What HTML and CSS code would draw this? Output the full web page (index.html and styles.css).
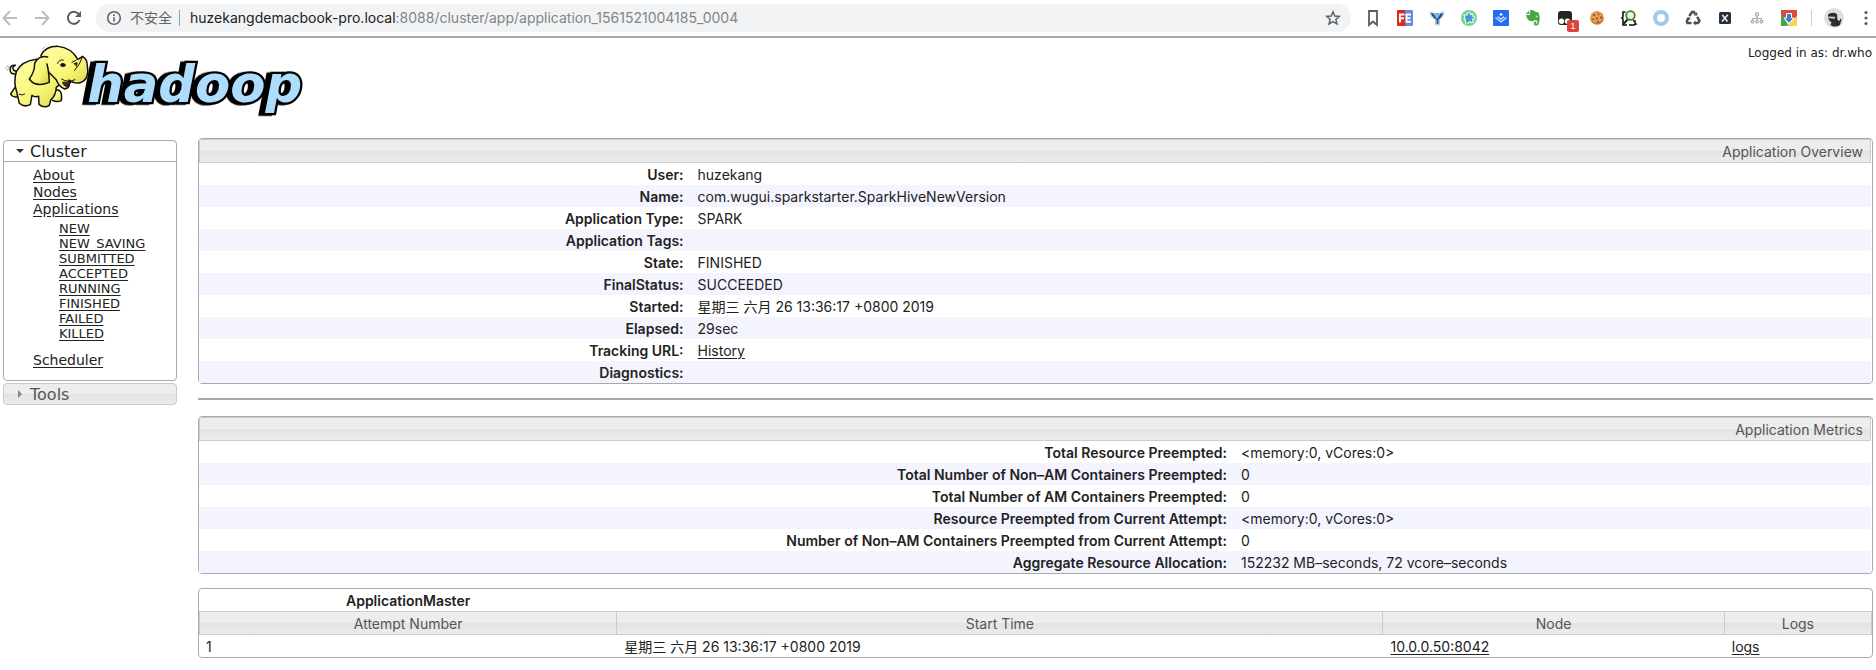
FILE: index.html
```
<!DOCTYPE html>
<html lang="zh-CN">
<head>
<meta charset="utf-8">
<title>Application application_1561521004185_0004</title>
<link rel="stylesheet" href="styles.css">
</head>
<body>
<header class="toolbar">
  <nav class="nav-buttons">
    <button class="icon-button" aria-label="Back"><svg viewBox="0 0 16 16" fill="none" stroke="#bbbdc0" stroke-width="2"><path d="M15 8H2M8 1L1.500 8L8 15"/></svg></button>
    <button class="icon-button" aria-label="Forward"><svg viewBox="0 0 16 16" fill="none" stroke="#bbbdc0" stroke-width="2"><path d="M1 8H14M8 1L14.500 8L8 15"/></svg></button>
    <button class="icon-button" aria-label="Reload"><svg viewBox="0 0 16 16" fill="none" stroke="#5a5d61" stroke-width="2"><path d="M13.500 10A6 6 0 1 1 12.500 4"/><path d="M15 1V7H9Z" fill="#5a5d61" stroke="none"/></svg></button>
  </nav>
  <div class="omnibox">
    <svg class="info" viewBox="0 0 16 16" fill="none" stroke="#5f6368" stroke-width="1.600"><circle cx="8" cy="8" r="6.300"/><path d="M8 7.300V11.500M8 4.300V6"/></svg>
    <span class="insecure">不安全</span>
    <span class="url"><b>huzekangdemacbook-pro.local</b>:8088/cluster/app/application_1561521004185_0004</span>
    <button class="icon-button star" aria-label="Bookmark this page"><svg viewBox="0 0 16 16" fill="none" stroke="#5f6368" stroke-width="1.500"><path d="M8 1.800L9.800 6L14.300 6.400L10.900 9.400L12 13.900L8 11.500L4 13.900L5.100 9.400L1.700 6.400L6.200 6Z"/></svg></button>
  </div>
  <div class="extensions">
    <button class="icon-button" aria-label="Reading list"><svg viewBox="0 0 16 16" fill="none" stroke="#5a5d61" stroke-width="1.800"><path d="M4 1H12V15L8 11.500L4 15Z"/></svg></button>
    <button class="icon-button" aria-label="FE helper"><svg viewBox="0 0 16 16"><rect width="16" height="16" rx="1" fill="#5b8fe8"/><path d="M1 0H8L8.500 16H1Q0 16 0 15V1Q0 0 1 0Z" fill="#d92b20"/><path d="M3 12.500V4.500H7.500M3 8.300H7M14 4.500H9.500V11.700H14M9.500 8.100H13.500" fill="none" stroke="#fff" stroke-width="1.900"/></svg></button>
    <button class="icon-button" aria-label="Yandex"><svg viewBox="0 0 16 16"><path d="M1 2Q4 1 5.500 4L8 8L10.500 4Q12 1 15 2Q15.500 6 10.500 10V15H6.500V10Q.5 6 1 2Z" fill="#eee" stroke="#c8c8c8"/><path d="M2 3Q4.500 2.500 5.500 5L8 9L10.500 5Q11.500 2.500 14 3Q14 6 9.500 10V14H7.500V10Q2 6 2 3Z" fill="#19539b"/><path d="M5 3H11L8 8Z" fill="#64b9ee"/></svg></button>
    <button class="icon-button" aria-label="Extension manager"><svg viewBox="0 0 16 16"><circle cx="8" cy="8" r="8" fill="#68d982"/><path d="M3 5L6 5Q5.500 2.500 8 2.500Q10 2.500 9.500 4.500L12 4L12 6.500Q14.500 6.500 13.500 9L11.500 9L12.500 12L10 12.500Q9 10.500 7.500 13L4.500 13V10Q2 9.500 4 8Z" fill="#4b96d5" stroke="#dff8ef" stroke-width="1.200"/></svg></button>
    <button class="icon-button" aria-label="Juejin"><svg viewBox="0 0 16 16"><rect width="16" height="16" rx="1" fill="#226cf4"/><g fill="none" stroke="#d5e8ff" stroke-width="1.200"><path d="M2.500 7.500L8 12L13.500 7.500M4.800 6.500L8 9.200L11.200 6.500"/></g><path d="M8 2.800L9.800 4.400L8 6L6.200 4.400Z" fill="#fff"/></svg></button>
    <button class="icon-button" aria-label="Evernote"><svg viewBox="0 0 16 16" fill="#46a846"><path d="M5 0Q9-.5 10 1.500L13.500 2.500Q15.500 8 14 13Q13.500 16 10.500 15.500Q8.500 15 9 12.500Q10 11 12 12Q10.500 12.500 10.800 13.700Q12.500 14 12.500 11.500Q11.500 9.500 9 10.500Q8 12 6 11Q2.500 11 1 5H4.500Q5.500 4 5 0Z"/><path d="M.8 4L4.200.7L4.300 4Z"/><path d="M11 5.500Q12.500 5.500 12.600 7L10.700 6.700Z" fill="#fff"/></svg></button>
    <button class="icon-button" aria-label="Tampermonkey"><svg viewBox="0 0 16 16"><rect x="1" y="1" width="14" height="14" rx="3" fill="#252525"/><circle cx="4.500" cy="11.300" r="2.700" fill="#fff"/><circle cx="10.500" cy="11.300" r="2.700" fill="#fff"/></svg><span class="badge">1</span></button>
    <button class="icon-button" aria-label="Cookies"><svg viewBox="0 0 16 16"><circle cx="8" cy="8" r="6.800" fill="#c77b32"/><circle cx="7.600" cy="7.200" r="5.900" fill="#e49b4f"/><g fill="#744018"><circle cx="5" cy="5" r=".9"/><circle cx="9.500" cy="4" r=".8"/><circle cx="12" cy="7.500" r=".9"/><circle cx="8" cy="8.500" r=".9"/><circle cx="4" cy="9.500" r=".8"/><circle cx="9" cy="12" r=".9"/></g></svg></button>
    <button class="icon-button" aria-label="Source search"><svg viewBox="0 0 16 16" fill="none"><path d="M4.500 2H2V7L.8 8L2 9V15H6M12 10.500L14 11V13L15 14L13 15H8" stroke="#111" stroke-width="1.600"/><path d="M7.500 8.500L2.500 14" stroke="#222" stroke-width="2"/><circle cx="9.500" cy="5.500" r="4.300" fill="#e7f5dd" stroke="#487b2c" stroke-width="1.800"/></svg></button>
    <button class="icon-button" aria-label="Ring"><svg viewBox="0 0 16 16" fill="none"><circle cx="8" cy="8" r="6" stroke="#9fcaeb" stroke-width="4"/></svg></button>
    <button class="icon-button" aria-label="Recycle"><svg viewBox="0 0 16 16" fill="none" stroke="#45505b" stroke-width="2.500"><path d="M4.300 6L7 2H9L10 4M12.200 6.800L14.500 11L13 13H9.500M6.500 13H2.500L1.800 11L3.500 8"/><path d="M8.500 5.500L12.500 5.500L12 2ZM10.500 10.500L8 13L10.500 15.500ZM1 8.200L4.500 7L5.500 10Z" fill="#45505b" stroke="none"/></svg></button>
    <button class="icon-button" aria-label="X"><svg viewBox="0 0 16 16"><rect x="2" y="2" width="12" height="12" rx="1.500" fill="#25313d"/><path d="M5.300 5L10.500 11.500M10.800 4.800L5 11.500" stroke="#eee" stroke-width="1.600"/></svg></button>
    <button class="icon-button" aria-label="Site map"><svg viewBox="0 0 16 16" fill="none" stroke="#aaa" stroke-width="1.200"><circle cx="8" cy="4.500" r="1.600"/><path d="M8 6V11M3.500 11V8.500H12.500V11"/><circle cx="3.500" cy="11.700" r="1.300"/><circle cx="8" cy="11.700" r="1.300"/><circle cx="12.500" cy="11.700" r="1.300"/></svg></button>
    <button class="icon-button" aria-label="Downloader"><svg viewBox="0 0 16 16"><path d="M0 0H16V8H0Z" fill="#d94a40"/><path d="M0 3L8 16H0Z" fill="#4aa553"/><path d="M16 6V16H6Z" fill="#f8d34c"/><path d="M5.500 3.500H10.500V8H13L8 13.500L3 8H5.500Z" fill="#3d80cb" stroke="#fff"/></svg></button>
    <span class="divider"></span>
    <button class="avatar" aria-label="Profile"><svg viewBox="0 0 20 20"><circle cx="10" cy="10" r="10" fill="#dedede"/><path d="M4 6.500Q8 3.500 13 6L13.500 12L15.500 13L16.500 10.500L17.500 11.500L16 17Q11 20 6.500 17L7.500 14Q4 13 4 6.500Z" fill="#292c30"/><path d="M4.300 8.500L11 8.800V10.800L4.600 10.300Z" fill="#dec2a7"/></svg></button>
    <button class="icon-button" aria-label="Menu"><svg viewBox="0 0 16 16" fill="#5a5d61"><circle cx="8" cy="2.500" r="1.600"/><circle cx="8" cy="8" r="1.600"/><circle cx="8" cy="13.500" r="1.600"/></svg></button>
  </div>
</header>

<div class="page-header">
  <svg class="logo" viewBox="15 135 895 216" role="img" aria-label="hadoop">
    <defs><linearGradient id="skin" x1="0" y1="0" x2="1" y2="1"><stop offset="0" stop-color="#ffffa8"/><stop offset=".6" stop-color="#f8f574"/><stop offset="1" stop-color="#d5cf48"/></linearGradient></defs>
    <text class="wordmark" x="262" y="306">hadoop</text>
    <g fill="url(#skin)" stroke="#111" stroke-width="4.500" stroke-linejoin="round" stroke-linecap="round">
      <path d="M47 222Q30 224 30 208Q32 193 46 196Q38 199 39 206Q41 214 50 213"/>
      <path d="M163 270Q190 265 184 302Q170 308 158 301"/>
      <path d="M45 262L32 282Q38 293 52 291"/>
      <path d="M110 178Q65 183 49 215Q40 245 50 275L58 310Q72 323 91 314L96 286Q104 292 116 289L117 313Q133 326 148 316L153 299Q168 287 169 262L195 240Z"/>
      <path d="M123 166Q137 138 174 139Q213 142 234 178L248 169Q262 177 262 196Q270 240 238 249Q218 250 207 240Q214 263 194 267Q177 260 169 239L148 218Q133 197 123 166Z"/>
      <path d="M143 171Q118 164 104 190Q105 214 88 237Q107 264 148 247Q147 214 141 192"/>
      <path d="M188 248Q194 263 207 258L212 247Z" fill="#5e1f1a" stroke-width="3"/>
      <path d="M173 190Q177 178 190 180M216 187L229 180M224 211Q241 193 247 172M185 237Q205 250 225 239M58 283Q67 288 74 282" fill="none" stroke-width="3"/>
      <path d="M182 193Q189 185 198 196Q191 203 184 199ZM223 190L232 188L230 198Z" fill="#111" stroke-width="2"/>
      <path d="M17 205L23 196M22 211L27 199M127 148L136 139" fill="none" stroke="#888" stroke-width="2"/>
    </g>
  </svg>
  <div class="login">Logged in as: dr.who</div>
</div>

<div class="layout">
  <aside class="sidebar">
    <section class="menu">
      <h3 class="menu-title"><svg viewBox="0 0 8 6"><path d="M0 1H8L4 5Z" fill="#333"/></svg>Cluster</h3>
      <ul class="menu-list">
        <li><a href="#">About</a></li>
        <li><a href="#">Nodes</a></li>
        <li><a href="#">Applications</a>
          <ul class="states">
            <li><a href="#">NEW</a></li>
            <li><a href="#">NEW_SAVING</a></li>
            <li><a href="#">SUBMITTED</a></li>
            <li><a href="#">ACCEPTED</a></li>
            <li><a href="#">RUNNING</a></li>
            <li><a href="#">FINISHED</a></li>
            <li><a href="#">FAILED</a></li>
            <li><a href="#">KILLED</a></li>
          </ul>
        </li>
        <li><a href="#">Scheduler</a></li>
      </ul>
    </section>
    <h3 class="menu-title collapsed"><svg viewBox="0 0 8 8"><path d="M2 0L6 4L2 8Z" fill="#888"/></svg>Tools</h3>
  </aside>

  <main class="content">
    <table class="info-table overview">
      <colgroup><col class="c-label"><col></colgroup>
      <thead><tr><th colspan="2">Application Overview</th></tr></thead>
      <tbody>
        <tr><th>User:</th><td>huzekang</td></tr>
        <tr><th>Name:</th><td>com.wugui.sparkstarter.SparkHiveNewVersion</td></tr>
        <tr><th>Application Type:</th><td>SPARK</td></tr>
        <tr><th>Application Tags:</th><td></td></tr>
        <tr><th>State:</th><td>FINISHED</td></tr>
        <tr><th>FinalStatus:</th><td>SUCCEEDED</td></tr>
        <tr><th>Started:</th><td>星期三 六月 26 13:36:17 +0800 2019</td></tr>
        <tr><th>Elapsed:</th><td>29sec</td></tr>
        <tr><th>Tracking URL:</th><td><a href="#">History</a></td></tr>
        <tr><th>Diagnostics:</th><td></td></tr>
      </tbody>
    </table>
    <hr class="rule">
    <table class="info-table metrics">
      <colgroup><col class="c-label"><col></colgroup>
      <thead><tr><th colspan="2">Application Metrics</th></tr></thead>
      <tbody>
        <tr><th>Total Resource Preempted:</th><td>&lt;memory:0, vCores:0&gt;</td></tr>
        <tr><th>Total Number of Non–AM Containers Preempted:</th><td>0</td></tr>
        <tr><th>Total Number of AM Containers Preempted:</th><td>0</td></tr>
        <tr><th>Resource Preempted from Current Attempt:</th><td>&lt;memory:0, vCores:0&gt;</td></tr>
        <tr><th>Number of Non–AM Containers Preempted from Current Attempt:</th><td>0</td></tr>
        <tr><th>Aggregate Resource Allocation:</th><td>152232 MB–seconds, 72 vcore–seconds</td></tr>
      </tbody>
    </table>
    <table class="attempts">
      <colgroup><col class="c-attempt"><col class="c-start"><col class="c-node"><col class="c-logs"></colgroup>
      <thead>
        <tr class="group"><th>ApplicationMaster</th><td colspan="3"></td></tr>
        <tr class="heads"><th>Attempt Number</th><th>Start Time</th><th>Node</th><th>Logs</th></tr>
      </thead>
      <tbody><tr><td>1</td><td>星期三 六月 26 13:36:17 +0800 2019</td><td><a href="#">10.0.0.50:8042</a></td><td><a href="#">logs</a></td></tr></tbody>
    </table>
  </main>
</div>
</body>
</html>
```
FILE: styles.css
```
* { box-sizing: border-box; }
body {
  margin: 0;
  background: #fff;
  color: #222;
  font: 14px/22px Inter, "Noto Sans CJK SC", sans-serif;
}
a { color: inherit; text-underline-offset: 2px; }
button { border: 0; padding: 0; background: none; font: inherit; }
svg { display: block; }

.toolbar {
  display: flex;
  align-items: center;
  height: 38px;
  padding: 0 2px;
  border-bottom: 2px solid #aaa;
}
.nav-buttons, .extensions { display: flex; align-items: center; gap: 16px; }
.icon-button { position: relative; flex: none; width: 16px; height: 16px; }
.icon-button svg { width: 16px; height: 16px; overflow: visible; }
.omnibox {
  flex: 1;
  display: flex;
  align-items: center;
  height: 28px;
  margin: 0 14px;
  padding: 0 10px;
  border-radius: 14px;
  background: #f1f3f4;
  color: #80868b;
}
.info { width: 16px; height: 16px; margin-right: 8px; }
.insecure {
  padding-right: 7px;
  border-right: 1px solid #9a9da1;
  line-height: 16px;
  color: #5f6368;
}
.url { margin-left: 10px; font: 14px/20px Inter, sans-serif; }
.url b { font-weight: 400; color: #202124; }
.star { margin-left: auto; }
.badge {
  position: absolute;
  left: 10px;
  top: 10px;
  width: 12px;
  height: 12px;
  border-radius: 2px;
  background: #db4437;
  color: #fff;
  font: 9px/12px "Liberation Sans", sans-serif;
  text-align: center;
}
.divider { width: 1px; height: 16px; margin: 0 -4px 0 -2px; background: #ccc; }
.avatar { width: 20px; height: 20px; margin-right: -2px; }

.page-header {
  display: flex;
  justify-content: space-between;
  align-items: flex-start;
  height: 100px;
  padding: 7px 4px 0 5px;
}
.logo { width: 298px; height: 72px; overflow: visible; }
.wordmark {
  font: italic bold 154px "DejaVu Sans", sans-serif;
  fill: #aedcfd;
  stroke: #000;
  stroke-width: 14px;
  stroke-linejoin: miter;
  paint-order: stroke;
  filter: drop-shadow(-12px 2px 0 #000);
}
.login { font: 12px/16px "DejaVu Sans", sans-serif; }

.layout { display: flex; align-items: flex-start; gap: 21px; padding: 0 3px; }
.sidebar {
  flex: none;
  width: 174px;
  margin-top: 2px;
  font: 14px/17px "DejaVu Sans", sans-serif;
}
.menu { margin-bottom: 2px; border: 1px solid #aaa; border-radius: 4px; }
.menu-title {
  display: flex;
  align-items: center;
  gap: 6px;
  height: 21px;
  margin: 0;
  padding-left: 12px;
  border-bottom: 1px solid #aaa;
  font-size: 16px;
  font-weight: 400;
}
.menu-title svg { width: 8px; height: 8px; }
.collapsed {
  height: 22px;
  border: 1px solid #ccc;
  border-radius: 4px;
  background: linear-gradient(#ededed 50%, #e3e3e3 50%, #ececec);
  color: #555;
}
.menu-list { margin: 0; padding: 5px 0 11px 29px; list-style: none; }
.states { margin: 0; padding: 3px 0 11px 26px; list-style: none; font-size: 13px; line-height: 15px; }

.content { flex: 1; min-width: 0; }
table {
  width: 100%;
  border: 1px solid #aaa;
  border-radius: 4px;
  border-spacing: 0;
  table-layout: fixed;
}
th, td { height: 22px; padding: 2px 7px 0; line-height: 20px; text-align: left; font-weight: 400; }
.info-table thead th, .heads th {
  height: 24px;
  border: 1px solid #ccc;
  background: linear-gradient(#ededed 50%, #e3e3e3 50%, #ececec);
  color: #555;
}
.info-table { padding-right: 1px; }
.info-table thead th { text-align: right; }
.info-table tbody th { text-align: right; font-weight: 600; }
.info-table tbody tr:nth-child(even) { background: #f4f4ff; }
.overview .c-label { width: 29.4%; }
.metrics .c-label { width: 61.9%; }
.rule { height: 2px; margin: 14px 0 16px; border: 0; background: #aaa; }
.attempts { margin-top: 14px; }
.c-attempt { width: 25%; }
.c-start { width: 45.8%; }
.c-node { width: 20.4%; }
.c-logs { width: 8.8%; }
.group th { text-align: center; font-weight: 600; }
.heads th { text-align: center; }
.heads th + th { border-left: 0; }
```
